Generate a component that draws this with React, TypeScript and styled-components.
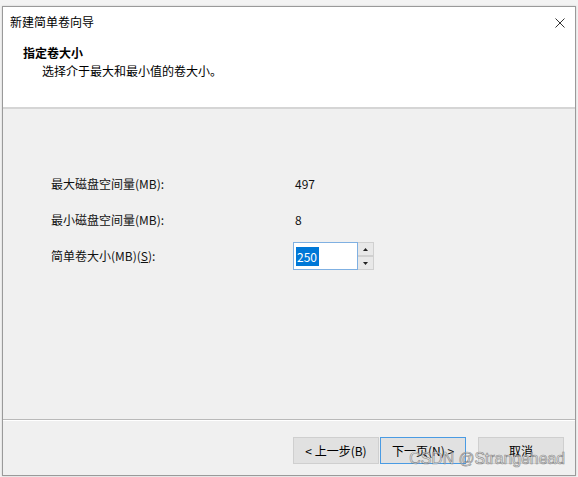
import React from "react";
import styled, { createGlobalStyle } from "styled-components";

const Global = createGlobalStyle`
  html, body { margin: 0; padding: 0; background: #f3f3f3; }
  body { font-family: "Noto Sans CJK SC", "Noto Sans", sans-serif; font-size: 12px; color: #000; }
  #root { width: 578px; height: 477px; overflow: hidden; }
`;

const Desktop = styled.div`
  width: 578px;
  height: 477px;
  padding: 6px 0 0 2px;
  box-sizing: border-box;
`;

const Dialog = styled.div`
  position: relative;
  width: 574px;
  height: 470px;
  box-sizing: border-box;
  border: 1px solid #9a9a9a;
  background: #f0f0f0;
  display: flex;
  flex-direction: column;
  box-shadow: 0 0 2px rgba(0, 0, 0, 0.15);
`;

const TitleBar = styled.div`
  height: 30px;
  background: #fff;
  display: flex;
  align-items: center;
  justify-content: space-between;
  padding: 0 10px 0 7px;
`;

const TitleText = styled.span`
  font-size: 12px;
  line-height: 30px;
  color: #000;
`;

const CloseIcon = styled.svg`
  width: 10px;
  height: 10px;
  margin-top: 1px;
`;

const Header = styled.div`
  background: #fff;
  padding: 7px 0 27px 20px;
  border-bottom: 2px solid #d5d5d5;
`;

const HeaderTitle = styled.div`
  font-weight: 700;
  font-size: 12px;
  line-height: 18px;
`;

const HeaderSub = styled.div`
  font-size: 12px;
  line-height: 18px;
  padding-left: 19px;
`;

const Body = styled.div`
  flex: 1;
  padding: 57px 0 0 48px;
  border-bottom: 1px solid #b9b9b9;
  display: flex;
  flex-direction: column;
`;

const Row = styled.div`
  height: 36px;
  display: grid;
  grid-template-columns: 242px auto;
  align-items: center;
`;

const Label = styled.span`
  font-size: 12px;
  line-height: 18px;
  color: #111;
`;

const Value = styled.span`
  font-size: 12px;
  line-height: 18px;
  padding-left: 2px;
  color: #111;
`;

const Spinner = styled.div`
  display: flex;
  align-items: center;
`;

const Field = styled.div`
  width: 65px;
  height: 28px;
  box-sizing: border-box;
  border: 1px solid #7fb0e2;
  background: #fff;
  display: flex;
  align-items: center;
  padding-left: 2px;
`;

const Selected = styled.span`
  background: #0078d7;
  color: #fff;
  font-size: 12px;
  line-height: 19px;
  padding: 0 2px 0 1px;
`;

const SpinButtons = styled.div`
  display: flex;
  flex-direction: column;
  gap: 0;
  height: 28px;
`;

const SpinButton = styled.div`
  width: 16px;
  height: 14px;
  box-sizing: border-box;
  border: 1px solid #d0d0d0;
  border-left: none;
  background: #e8e8e8;
  display: flex;
  align-items: center;
  justify-content: center;
  & + & { border-top: 1px solid #d0d0d0; }
`;

const Footer = styled.div`
  height: 55px;
  box-sizing: border-box;
  padding: 16px 11px 0 0;
  display: flex;
  justify-content: flex-end;
  align-items: flex-start;
  gap: 12px;
  border-top: 1px solid #fff;
`;

const NavGroup = styled.div`
  display: flex;
  gap: 1px;
`;

const Button = styled.div<{ $default?: boolean }>`
  width: 86px;
  height: 27px;
  box-sizing: border-box;
  background: #e1e1e1;
  border: 1px solid ${(p) => (p.$default ? "#4a9be3" : "#cfcfcf")};
  display: flex;
  align-items: center;
  justify-content: center;
  font-size: 12px;
  line-height: 18px;
  color: #000;
`;

const Watermark = styled.div`
  position: absolute;
  right: 10px;
  bottom: 7px;
  font-family: "Liberation Sans", Arial, sans-serif;
  font-size: 15.8px;
  line-height: 18px;
  color: rgba(255, 255, 255, 0.55);
  -webkit-text-stroke: 0.7px rgba(110, 110, 110, 0.75);
  pointer-events: none;
  white-space: nowrap;
`;

const Arrow = ({ up }: { up?: boolean }) => (
  <svg width="5" height="3" viewBox="0 0 5 3">
    <path d={up ? "M2.5 0 L5 3 L0 3 Z" : "M0 0 L5 0 L2.5 3 Z"} fill="#222" />
  </svg>
);

export default function App() {
  return (
    <>
      <Global />
      <Desktop>
        <Dialog>
          <TitleBar>
            <TitleText>新建简单卷向导</TitleText>
            <CloseIcon viewBox="0 0 10 10">
              <path d="M0.5 0.5 L9.5 9.5 M9.5 0.5 L0.5 9.5" stroke="#333" strokeWidth="1" fill="none" />
            </CloseIcon>
          </TitleBar>
          <Header>
            <HeaderTitle>指定卷大小</HeaderTitle>
            <HeaderSub>选择介于最大和最小值的卷大小。</HeaderSub>
          </Header>
          <Body>
            <Row>
              <Label>最大磁盘空间量(MB):</Label>
              <Value>497</Value>
            </Row>
            <Row>
              <Label>最小磁盘空间量(MB):</Label>
              <Value>8</Value>
            </Row>
            <Row>
              <Label>
                简单卷大小(MB)(<u>S</u>):
              </Label>
              <Spinner>
                <Field>
                  <Selected>250</Selected>
                </Field>
                <SpinButtons>
                  <SpinButton>
                    <Arrow up />
                  </SpinButton>
                  <SpinButton>
                    <Arrow />
                  </SpinButton>
                </SpinButtons>
              </Spinner>
            </Row>
          </Body>
          <Footer>
            <NavGroup>
              <Button>&lt; 上一步(B)</Button>
              <Button $default>下一页(N) &gt;</Button>
            </NavGroup>
            <Button>取消</Button>
          </Footer>
          <Watermark>CSDN @Strangehead</Watermark>
        </Dialog>
      </Desktop>
    </>
  );
}
